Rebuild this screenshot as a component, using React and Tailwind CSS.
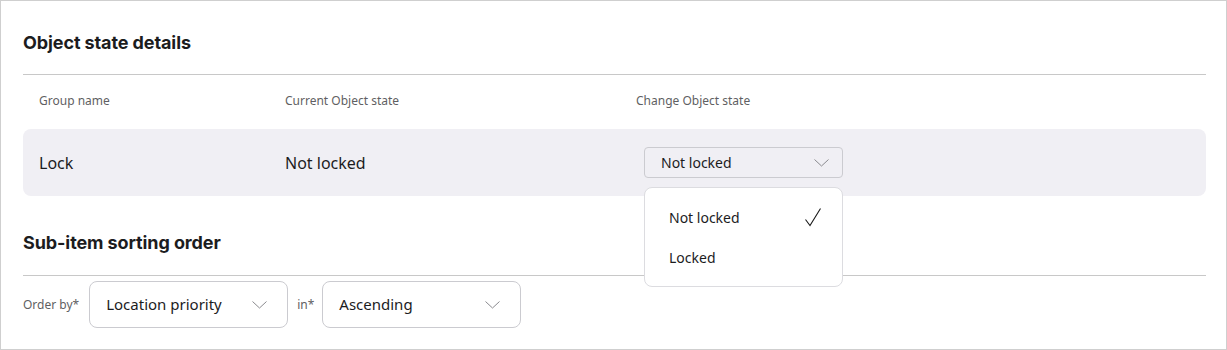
import React from 'react';

const Chevron = ({ className = '' }) => (
  <svg width="15" height="8" viewBox="0 0 15 8" fill="none" className={className}>
    <path d="M0.5 0.5 L7.5 7 L14.5 0.5" stroke="#8a8a8e" strokeWidth="1" />
  </svg>
);

const Check = () => (
  <svg width="18" height="20" viewBox="0 0 18 20" fill="none">
    <path d="M1.5 12.5 L6 18.5 L16.5 1.5" stroke="#1a1a1a" strokeWidth="1.1" />
  </svg>
);

function App() {
  return (
    <div
      className="w-[1227px] h-[350px] border border-[#cfcfcf] bg-white pl-[22px] pr-[20px] pt-[29px] overflow-hidden text-[#1c1c1e]"
      style={{ fontFamily: '"Noto Sans", "Open Sans", sans-serif' }}
    >
      {/* ---------------- object state ---------------- */}
      <h2 className="text-[18px] leading-[26px] font-bold font-['Inter',sans-serif] tracking-[-0.1px]">
        Object state details
      </h2>
      <div className="mt-[18px] border-t border-[#c8c8c8]" />

      <div className="mt-[17px] grid grid-cols-[246px_351px_1fr] px-4 text-[12px] leading-[18px] text-[#5f5f63]">
        <div>Group name</div>
        <div>Current Object state</div>
        <div>Change Object state</div>
      </div>

      <div className="mt-[19px] grid grid-cols-[246px_351px_1fr] items-center h-[67px] px-4 rounded-[8px] bg-[#f0eff4] text-[16px]">
        <div>Lock</div>
        <div>Not locked</div>
        <div className="pl-[8px]">
          <div className="relative w-[199px]">
            <div className="flex items-center justify-between h-[31px] rounded-[4px] border border-[#cbcbd0] bg-[#f0eff4] pl-4 pr-[13px] text-[14px]">
              <span>Not locked</span>
              <Chevron />
            </div>
            <div className="absolute left-0 top-[40px] z-10 w-[199px] rounded-[8px] border border-[#dcdce0] bg-white pt-[9px] pb-[9px] text-[14px]">
              <div className="flex items-center justify-between h-10 pl-6 pr-[20px]">
                <span>Not locked</span>
                <Check />
              </div>
              <div className="flex items-center h-10 pl-6">
                <span>Locked</span>
              </div>
            </div>
          </div>
        </div>
      </div>

      {/* ---------------- sorting ---------------- */}
      <h2 className="mt-[34px] text-[18px] leading-[26px] font-bold font-['Inter',sans-serif] tracking-[-0.1px]">
        Sub-item sorting order
      </h2>
      <div className="mt-[19px] border-t border-[#c8c8c8]" />

      <div className="mt-[5px] flex items-center">
        <span className="text-[12px] text-[#5f5f63] mr-[10px]">Order by*</span>
        <div className="flex items-center justify-between w-[199px] h-[47px] rounded-[8px] border border-[#cbcbd0] pl-4 pr-[20px] text-[15px]">
          <span>Location priority</span>
          <Chevron />
        </div>
        <span className="ml-[9px] mr-[8px] text-[12px] text-[#5f5f63]">in*</span>
        <div className="flex items-center justify-between w-[199px] h-[47px] rounded-[8px] border border-[#cbcbd0] pl-4 pr-[20px] text-[15px]">
          <span>Ascending</span>
          <Chevron />
        </div>
      </div>
    </div>
  );
}

export default App;
